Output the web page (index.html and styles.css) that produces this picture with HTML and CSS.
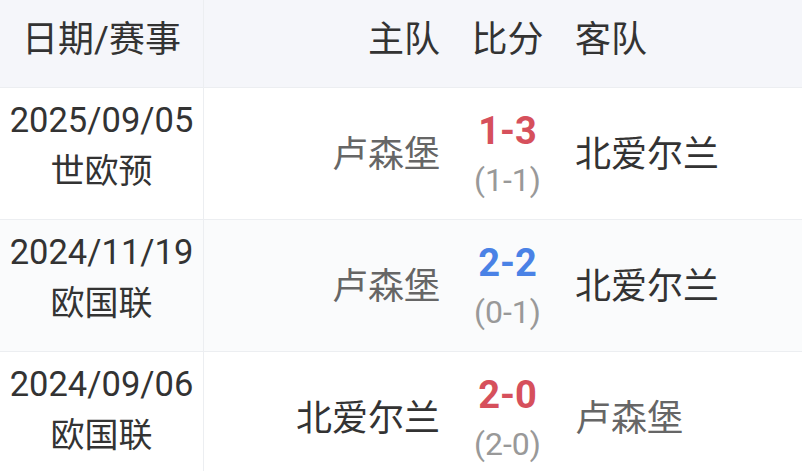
FILE: index.html
```html
<!DOCTYPE html>
<html lang="zh">
<head>
<meta charset="utf-8">
<link rel="stylesheet" href="styles.css">
</head>
<body>
<div class="table">
  <div class="row head">
    <div class="cell date">日期/赛事</div>
    <div class="cell home">主队</div>
    <div class="cell score">比分</div>
    <div class="cell away">客队</div>
  </div>
  <div class="row">
    <div class="cell date"><span class="day">2025/09/05</span><span class="comp">世欧预</span></div>
    <div class="cell home dim">卢森堡</div>
    <div class="cell score"><span class="ft red">1-3</span><span class="ht">(1-1)</span></div>
    <div class="cell away">北爱尔兰</div>
  </div>
  <div class="row alt">
    <div class="cell date"><span class="day">2024/11/19</span><span class="comp">欧国联</span></div>
    <div class="cell home dim">卢森堡</div>
    <div class="cell score"><span class="ft blue">2-2</span><span class="ht">(0-1)</span></div>
    <div class="cell away">北爱尔兰</div>
  </div>
  <div class="row">
    <div class="cell date"><span class="day">2024/09/06</span><span class="comp">欧国联</span></div>
    <div class="cell home">北爱尔兰</div>
    <div class="cell score"><span class="ft red">2-0</span><span class="ht">(2-0)</span></div>
    <div class="cell away dim">卢森堡</div>
  </div>
</div>
</body>
</html>
```

FILE: styles.css
```css
* { box-sizing: border-box; }
html, body { margin: 0; padding: 0; background: #fff; }
body {
  font-family: Roboto, "Noto Sans CJK SC", sans-serif;
  color: #333;
  font-size: 36px;
  width: 802px;
  height: 471px;
  overflow: hidden;
}
.table { display: flex; flex-direction: column; }
.row {
  display: grid;
  grid-template-columns: 204px 236px 135px 1fr;
  height: 132px;
  border-top: 1px solid #eceef1;
  background: #fff;
}
.row.alt { background: #fafbfc; }
.row.head {
  height: 87px;
  border-top: none;
  background: #f5f6fa;
}
.cell { display: flex; align-items: center; line-height: 51px; }
.head .cell { padding-bottom: 6px; }
.date {
  border-right: 1px solid #eceef1;
  flex-direction: column;
  justify-content: center;
  text-align: center;
}
.row:not(.head) .date { justify-content: flex-start; padding-top: 7px; }
.head .date { flex-direction: row; }
.day { font-size: 34.5px; }
.comp { font-size: 34px; }
.home { justify-content: flex-end; }
.score { justify-content: center; flex-direction: column; }
.head .score { flex-direction: row; }
.away { justify-content: flex-start; }
.row:not(.head) .home, .row:not(.head) .away { padding-top: 3px; }
.dim { color: #666; }
.row:not(.head) .score { padding-top: 4px; }
.ft { font-weight: 700; font-size: 38px; line-height: 48px; }
.ht { color: #999; font-size: 32px; line-height: 50px; }
.red { color: #d6505c; }
.blue { color: #4a82e6; }
```
